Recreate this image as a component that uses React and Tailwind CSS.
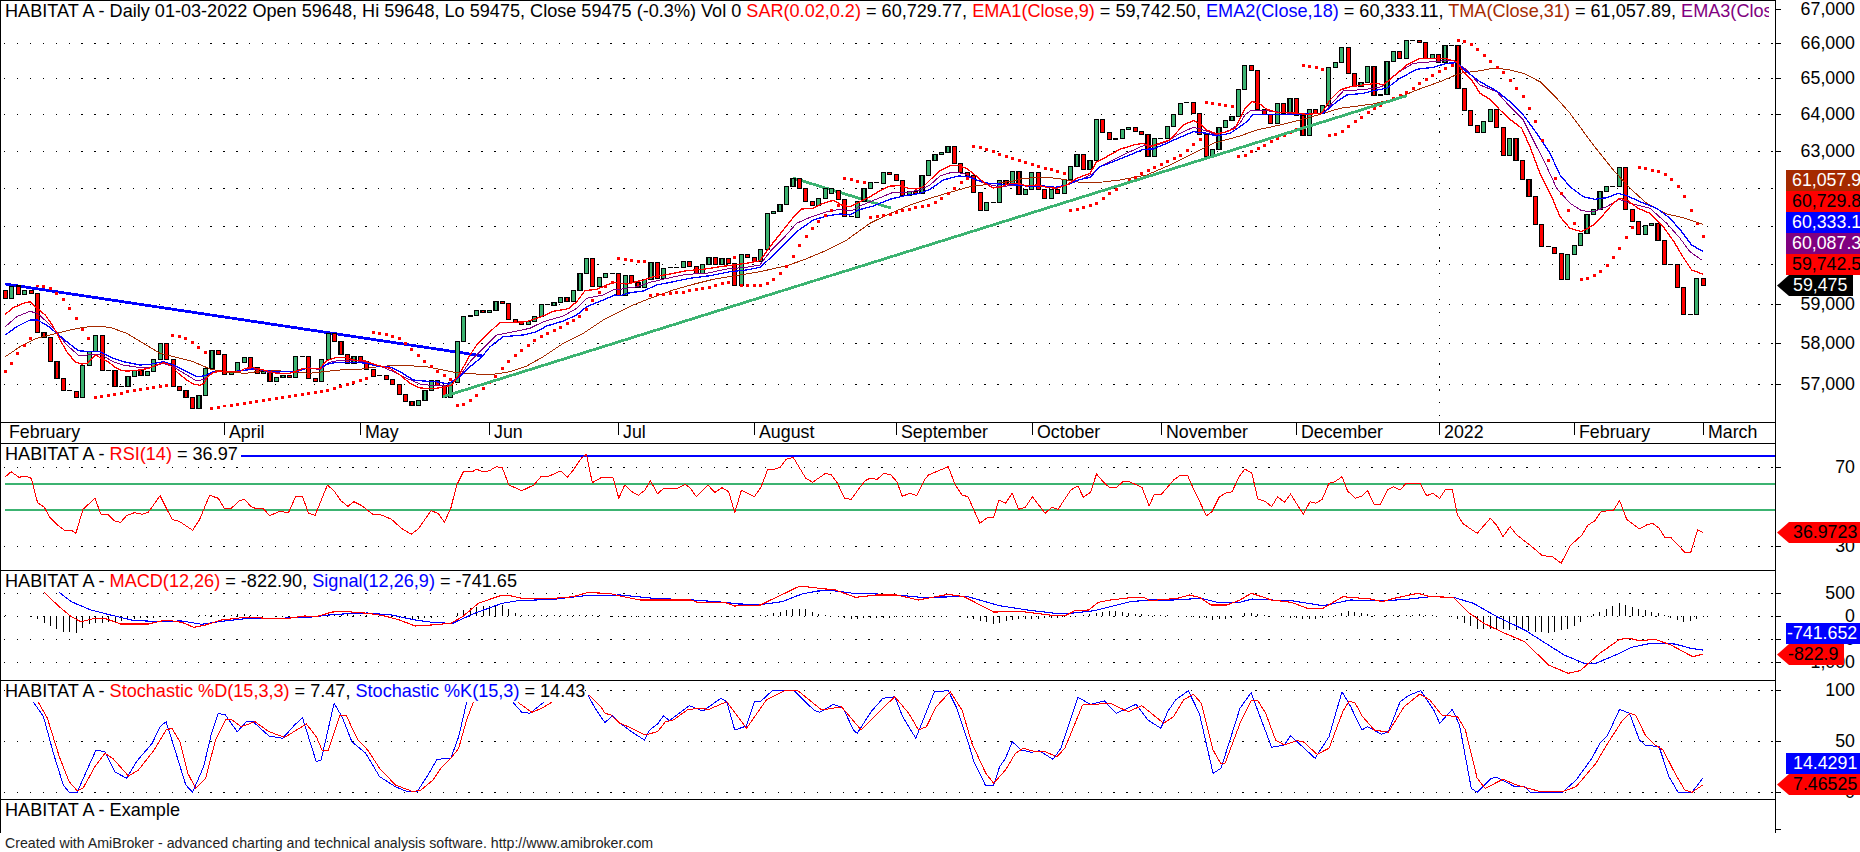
const RED = "#ff0000";
const BLUE = "#0000ff";
const GREEN = "#3cb371";
const BROWN = "#a52a00";
const PURPLE = "#800080";

// points were read off crops of the chart: crop offset + zoomed pixel / scale
const S = 2.529;
const crop = (x0, y0, sx, flat) => {
  const out = [];
  for (let i = 0; i < flat.length; i += 2) out.push([x0 + flat[i] / sx, y0 + flat[i + 1] / 3]);
  return out;
};
const toPath = (pts) => pts.map((p) => p[0].toFixed(1) + "," + p[1].toFixed(1)).join(" ");

const barX = (i) => 5.33 + 6.456 * i;

const barRows = [
  [270, "r62,85 g50,85 r48,73 g62,73 r62,70 r70,187 r187,203 r203,274 r274,325 r325,361 k362 r364,382 g286,382 g245,286 g196,245 r196,301 k301 r301,349 k349 g319,349 g301,319 r301,316 g304,316 g268,304 g220,268 r220,268 r268,349 r349,361 r361,382 r382,415 g376,415 g295,376 g241,295 r241,253 r253,313 g307,313 g277,307 g262,277 r262,292 r292,310 g304,310 r304,334 g322,334 g316,322 r316,322 g259,322 k259 r259,325"],
  [230, "r445,455 g388,455 g310,388 r310,334 r334,373 r373,400 g379,400 r379,394 r394,418 r418,439 k436 r436,448 r448,463 r463,493 r493,514 r514,526 g511,526 g481,511 g451,481 r451,466 r466,502 g457,502 g334,457 g259,334 k258 g241,256 r241,247 g241,247 g214,241 r214,220 r220,268 r268,277 r277,283 g274,283 g259,274 g223,259 k224 g217,226 g202,217 r202,214 g181,214 g130,181 g85,130 r85,169 g142,169 g130,142 k130 r130,196"],
  [130, "g436,496 r436,457 r457,472 g448,472 g397,448 r397,445 g415,445 k413 k412 g394,412 r394,409 r409,430 g403,430 g382,403 r382,403 g385,403 r385,400 r400,466 g373,466 r373,382 r382,394 g358,394 g250,358 g244,250 g223,244 g169,223 g145,169 r145,175 r175,214 r214,226 g205,226 g175,205 g175,190 r181,208 r208,259 k260 g214,262 g175,214 g157,175 k158 g127,160 r127,133 r133,151 r151,196 g184,196 r184,190 g136,190 g91,136"],
  [50, "g313,331 g307,313 g289,307 r289,340 r340,367 r367,376 r376,427 r427,481 g457,481 k457 g391,457 r391,403 g364,403 r364,433 g418,433 g367,418 r367,418 r418,445 g418,445 r418,430 g388,430 g349,388 g313,349 r313,358 g331,358 g208,331 r208,247 r247,268 k267 g238,265 g232,238 r232,244 r244,253 r253,319 g265,319 k265 g229,265 g193,229 g160,193 k158 r157,190 r190,253 r253,319 g298,319 g232,298 g211,232 g199,211 g118,199"],
  [30, "g106,178 r106,121 r121,238 r238,253 r253,280 g220,280 r220,250 g205,250 r205,256 r256,316 g238,316 r238,250 g226,250 g112,226 g97,112 g52,97 r52,130 r130,169 g157,169 g109,157 r109,196 k195 g94,193 g64,94 r64,85 g31,85 k31 r31,37 r37,85 g73,85 r73,97 g46,97 k46 r46,175 r175,241 r241,286 r286,307 g274,307 g238,274 r238,292 r292,376"],
  [60, "g235,286 r235,301 r301,358 r358,409 r409,493 r493,559 k560 r562,580 r580,658 g583,658 g556,583 g520,556 g463,520 g448,463 g394,448 g379,394 k379 g322,379 r322,448 r448,484 r484,523 g496,523 g490,496 r490,541 r541,613 k613 r613,682 r682,763 k763 g655,763 r655,676"],
];

const bars = barRows.flatMap(([y0, row]) =>
  row.split(" ").map((item) => {
    const [top, bot] = item.slice(1).split(",").map(Number);
    return { kind: item[0], top: y0 + top / 3, bot: y0 + (bot ?? top) / 3 };
  })
);

const ema1 = [
  ...crop(0, 270, 3, [16,133,40,113,70,100,91,95,112,115,136,135,160,170,178,205,200,245,225,275,245,282,262,280,286,255,304,265,325,275,343,290,364,302,385,303,420,300,445,295,470,285,490,278,510,285,535,310,560,330,580,342,600,346,612,340,622,320,640,308,660,303,690,305,720,305,735,295,760,293,790,300,830,310,870,310,885,305,910,295,930,295]),
  ...crop(310, 230, 3, [30,415,50,392,80,382,110,382,130,390,165,393,200,405,240,415,270,435,300,460,330,474,370,476,400,472,425,465,450,430,480,375,500,345,530,315,570,277,615,277,650,275,690,262,730,244,775,236,800,215,825,182,860,178,890,165,915,157,930,160]),
  ...crop(620, 130, 3, [20,462,70,450,100,440,150,432,200,422,250,418,300,410,340,405,380,400,420,392,450,350,490,300,520,262,545,237,580,235,610,220,640,211,665,225,690,230,720,215,745,203,775,185,810,168,840,167,865,175,890,177,910,170,930,150]),
  ...crop(930, 50, 3, [30,362,60,347,85,347,110,355,135,375,165,400,190,414,215,410,240,400,270,402,290,408,320,405,350,412,380,415,410,405,440,385,480,370,500,335,530,320,570,298,610,285,640,280,660,290,690,280,720,270,760,225,790,212,810,220,830,240,860,252,890,245,915,235,930,205]),
  ...crop(1240, 30, 3, [15,235,35,215,55,218,80,238,110,247,150,248,200,253,245,250,270,210,300,180,330,170,370,165,410,160,430,165,460,140,500,105,540,85,580,85,615,85,650,95,670,125,695,150,720,190,750,208,780,240]),
  ...crop(1480, 60, 3, [90,178,125,205,150,260,180,340,215,410,240,470,270,505,305,515,340,495,365,470,400,430,418,415,440,420,475,445,510,460,550,500,585,550,605,585,635,630,670,643]),
];

const ema2 = [
  ...crop(0, 270, 3, [16,195,50,170,90,150,112,150,140,165,170,190,200,215,235,242,270,245,300,245,340,265,370,275,420,285,450,283,490,275,520,285,560,305,590,320,612,318,640,305,680,305,720,303,770,295,800,303,860,305,895,303,920,295,930,296]),
  ...crop(310, 230, 3, [30,415,50,403,80,397,140,397,170,400,200,408,240,411,270,425,310,450,340,453,380,455,415,462,450,440,480,410,515,382,540,350,580,320,640,315,680,305,710,288,760,273,800,255,830,230,880,210,915,195,930,197]),
  ...crop(620, 130, 3, [30,488,70,483,110,465,160,455,210,445,270,437,330,425,380,420,420,412,450,385,490,345,530,305,580,270,620,258,660,252,690,255,715,240,760,228,810,208,850,198,900,190,930,178]),
  ...crop(930, 50, 3, [40,390,85,378,115,380,140,390,175,400,220,403,260,405,290,408,340,408,375,412,410,405,445,390,480,382,510,350,555,333,600,315,640,298,670,297,710,280,750,262,790,245,830,250,860,258,900,250,930,230]),
  ...crop(1240, 30, 3, [20,275,40,253,100,253,180,253,250,250,290,215,320,195,370,190,410,180,440,175,480,145,530,118,580,112,620,100,650,98,680,125,720,155,770,183]),
  ...crop(1480, 60, 3, [90,125,130,165,170,220,210,280,240,345,270,380,310,410,345,418,380,413,415,400,440,407,480,425,530,445,570,475,605,515,635,555,670,575]),
];

const ema3 = [
  ...crop(0, 270, 3, [16,170,50,140,90,124,112,130,140,155,170,185,200,225,235,255,260,255,300,253,340,275,370,285,420,293,450,293,490,280,520,290,560,315,590,333,612,328,640,305,700,305,770,297,810,308,870,310,900,298,930,293]),
  ...crop(310, 230, 3, [30,420,55,398,90,390,140,392,170,398,210,408,250,425,290,445,330,462,370,467,410,465,450,437,480,395,520,355,560,315,610,305,660,295,700,275,760,258,800,235,830,205,880,195,915,177,930,178]),
  ...crop(620, 130, 3, [50,470,90,457,150,443,200,433,260,430,320,417,380,412,420,405,450,365,490,325,530,280,570,262,620,245,660,238,695,243,720,228,770,207,820,187,860,187,900,180,930,165]),
  ...crop(930, 50, 3, [30,378,65,367,100,370,130,385,170,403,210,410,260,405,300,408,350,410,385,412,420,402,460,385,490,370,510,350,560,325,600,305,640,287,670,288,710,275,750,250,790,232,820,240,860,255,900,240,930,220]),
  ...crop(1240, 30, 3, [15,255,35,240,80,242,150,250,250,250,280,215,310,183,380,178,425,170,470,130,520,100,580,95,640,90,680,120,720,165]),
  ...crop(1480, 60, 3, [50,95,90,140,130,180,160,240,200,320,230,385,270,430,305,452,340,455,380,440,418,418,450,430,510,445,560,490,600,535,630,575,665,600]),
];

const tma = [
  ...crop(0, 270, 3, [16,260,60,230,110,205,170,190,210,180,250,172,290,169,330,172,380,190,430,220,480,250,530,262,580,275,630,297,680,307,740,310,800,300,870,305,930,310]),
  ...crop(310, 230, 3, [40,425,90,420,150,418,190,412,240,407,295,407,350,410,400,420,440,428,510,433,550,433,600,425,650,408,700,380,760,340,820,310,880,270,930,245]),
  ...crop(620, 130, 3, [40,525,90,505,160,480,220,463,280,448,340,438,420,425,500,407,550,390,610,365,680,330,750,280,800,255,870,225,930,205]),
  ...crop(930, 50, 3, [50,430,120,410,180,402,240,395,280,385,350,382,400,388,450,397,510,397,570,390,650,375,720,345,790,310,850,280,930,258]),
  ...crop(1240, 30, 3, [50,300,120,285,200,265,300,235,400,222,470,205,530,180,600,155,660,130]),
  ...crop(1480, 60, 3, [0,32,40,25,80,28,130,40,180,65,230,115,270,160,340,255,400,330,450,385,500,430,560,462,610,473,668,493]),
];

const sar = [
  ...crop(0, 270, 3, [16,304,34,280,52,250,73,226,91,205,112,48,130,50,151,55,169,70,190,88,208,115,229,145,247,178,265,205,286,382,304,379,325,376,343,373,364,370,382,364,403,361,421,358,442,355,460,352,481,349,499,346,517,196,538,199,556,205,577,217,595,232,616,247,634,415,655,412,673,408,694,406,712,403,733,400,751,397,769,394,790,391,808,388,829,385,847,382,868,379,886,376,907,373,925,370]),
  ...crop(310, 230, 3, [16,487,34,484,52,481,73,475,91,469,112,463,130,457,151,451,169,445,190,307,208,310,229,313,247,319,268,325,286,340,304,358,325,376,343,394,364,409,382,424,403,436,421,448,442,526,460,523,481,511,499,496,520,475,538,457,556,439,577,415,595,394,616,376,634,361,655,346,673,331,694,319,712,310,733,301,751,292,772,280,790,271,808,259,829,238,847,211,868,187,886,169,907,157,925,85]),
  ...crop(620, 130, 3, [16,388,34,391,55,394,73,394,91,496,112,493,130,493,151,490,169,487,190,487,208,481,229,478,247,475,268,472,286,466,307,460,325,457,343,382,364,466,382,466,403,466,421,466,442,460,460,448,481,430,499,409,520,379,538,346,559,319,577,295,595,274,616,256,634,241,655,226,673,145,694,148,712,154,733,157,751,262,772,259,790,256,811,253,829,247,847,241,868,238,886,232,907,229,925,226]),
  ...crop(930, 50, 3, [16,457,34,445,55,430,73,415,94,397,112,385,130,289,151,292,169,298,190,304,208,313,229,319,247,325,268,331,286,337,307,343,325,349,346,355,364,358,382,364,403,370,421,481,442,478,460,472,481,466,499,460,520,445,538,430,559,418,577,403,598,391,616,382,634,370,655,361,673,352,694,343,712,334,733,325,751,316,772,301,790,283,811,268,829,157,847,160,868,163,886,166,907,169,925,319]),
  ...crop(1240, 30, 3, [16,376,34,364,55,355,73,346,94,334,112,325,133,316,151,307,169,298,190,106,208,109,229,112,247,118,268,316,286,313,307,304,325,289,346,274,364,262,385,247,403,235,421,226,442,214,460,205,481,196,499,187,520,175,538,160,559,148,577,136,598,124,616,115,637,106,655,31,673,34,694,43,712,58,733,76,751,94,772,112,790,127]),
  ...crop(1480, 60, 3, [31,4,52,22,70,37,91,61,109,85,130,109,148,145,166,184,187,241,205,301,226,355,244,400,265,451,283,490,304,658,322,655,343,646,361,634,382,616,400,592,418,565,439,532,457,502,478,322,496,325,517,331,535,334,556,343,574,358,595,379,613,409,634,451,652,492,670,529]),
];

const rsi = [
  ...crop(0, 420, S, [14,170,28,155,48,172,65,168,79,175,95,248,112,262,125,290,145,315,162,330,180,330,192,340,210,268,240,235,255,282,272,282,290,303,305,307,320,287,340,278,360,283,375,277,405,227,435,298,455,305,487,331,505,298,530,226,552,235,568,267,585,265,605,243,618,238,635,260,650,267,665,265,682,287,705,275,730,277,748,229,765,229,780,280,797,286,828,195,845,213,862,242,880,259,895,245,915,257,945,285,960,283,990,298,1015,325,1040,343,1058,327,1090,272,1108,280,1124,307,1140,265,1155,195,1172,155,1195,155,1205,148,1222,155,1238,152,1255,140,1270,143,1287,195,1320,212,1350,195,1368,170,1385,170,1418,153,1435,172,1450,150,1470,115,1483,103,1498,188,1520,173,1550,172,1565,235]),
  ...crop(620, 420, S, [12,195,30,215,47,226,63,210,77,182,95,222,110,205,145,205,165,193,178,205,193,230,222,195,240,217,258,203,275,215,290,278,307,211,340,230,357,200,373,150,390,148,405,142,420,118,438,112,470,175,487,187,520,160,535,165,550,190,568,235,585,238,605,205,620,182,632,175,650,178,668,160,685,165,700,185,714,229,733,220,750,227,770,180,780,165,830,140,848,195,865,225,880,230,910,310,930,292,945,292,958,240,975,250,992,220,1008,268,1025,262,1043,230,1075,280,1092,262,1108,268,1140,210,1158,198,1172,232,1190,217,1205,162,1222,185,1238,203,1255,203,1272,185,1288,185,1320,202,1338,257,1352,222,1370,222,1400,180,1418,165,1435,165,1450,205,1483,287,1497,275,1515,232,1530,220,1548,215,1565,172]),
  ...crop(1240, 420, S, [12,147,30,160,45,237,65,245,80,260,95,230,112,247,128,222,160,283,177,245,192,250,208,238,225,190,240,185,258,170,272,213,292,235,308,228,323,212,340,255,355,253,373,210,388,200,405,210,420,190,455,190,472,227,488,220,505,235,520,208,537,208,550,285,565,312,600,340,633,295,650,317,665,350,683,320,700,345,733,375,765,407,790,410,812,430,835,377,865,345,880,315,897,303,913,275,945,270,960,242,978,298,1010,327,1028,315,1043,310,1060,325,1075,353,1090,353,1125,397,1140,397,1157,330,1170,337]),
];

const macd = [
  ...crop(0, 420, S, [112,517,145,555,180,590,205,605,240,595,270,597,305,612,375,612,420,600,460,607,490,622,520,615,560,600,620,592,680,595,730,595,770,588,800,590,840,576,880,575,930,580,970,587,1010,600,1050,618,1090,615,1140,610,1170,590,1210,550,1265,527,1290,527,1320,535,1400,535,1450,530,1485,518,1540,520,1568,528]),
  ...crop(620, 420, S, [50,540,90,540,180,540,195,547,265,547,290,558,355,555,385,538,455,498,520,507,540,508,595,532,650,525,700,525,755,540,830,523,870,530,945,576,1020,575,1100,587,1130,585,1150,572,1185,570,1210,547,1240,540,1300,532,1325,532,1340,542,1410,535,1440,525,1465,532,1495,555,1535,555,1568,540]),
  ...crop(1240, 420, S, [28,520,60,532,80,540,130,547,170,565,210,565,260,530,330,537,360,545,390,535,450,520,480,530,540,532,580,580,620,612,670,640,720,665,780,735,830,760,860,752,910,700,960,658,985,655,1010,662,1050,658,1090,675,1145,710,1170,703]),
];

const signal = [
  ...crop(0, 420, S, [150,517,180,545,230,570,280,585,340,602,400,604,460,603,510,613,560,604,620,596,700,595,780,592,850,583,930,579,990,585,1050,600,1100,608,1145,610,1200,580,1270,550,1310,542,1400,538,1480,527,1568,525]),
  ...crop(620, 420, S, [85,535,185,540,265,547,300,552,360,553,410,545,460,522,500,513,540,512,590,520,650,522,700,525,760,532,880,530,960,557,1030,570,1100,580,1140,580,1200,572,1290,545,1340,540,1400,540,1470,535,1510,547,1568,547]),
  ...crop(1240, 420, S, [30,537,80,540,130,542,210,557,280,540,360,543,430,537,480,530,540,532,590,550,650,590,720,630,820,705,870,730,900,730,960,700,990,682,1040,670,1100,672,1140,685,1170,690]),
];

// macd histogram, [x in crop px, height from the zero line]
const histKeys = [
  ...[[30,-2],[90,2],[100,14],[160,46],[195,49],[225,22],[300,16],[330,8],[400,3],[500,-3],[620,-6],[700,2],[800,-2],[850,-8],[930,-3],[1040,8],[1090,5],[1140,-2],[1170,-18],[1210,-30],[1270,-34],[1300,-12],[1320,-4],[1500,-5],[1560,2]].map(([x, h]) => [x / S, h]),
  ...[[0,3],[300,2],[370,-4],[440,-24],[470,-22],[500,-8],[530,-3],[580,8],[700,3],[850,0],[900,10],[945,22],[1000,10],[1130,3],[1180,-6],[1250,-18],[1310,-6],[1400,-2],[1480,6],[1500,10],[1560,4]].map(([x, h]) => [620 + x / S, h]),
  ...[[0,-4],[20,-12],[60,-3],[120,3],[190,10],[240,-3],[270,-15],[350,-2],[460,-6],[540,2],[560,15],[600,38],[700,40],[780,50],[830,38],[865,15],[880,0],[910,-12],[960,-40],[1000,-25],[1060,-8],[1080,0],[1125,18],[1170,3]].map(([x, h]) => [1240 + x / S, h]),
];

const histAt = (x) => {
  for (let k = 1; k < histKeys.length; k++) {
    const [x1, h1] = histKeys[k];
    if (x <= x1) {
      const [x0, h0] = histKeys[k - 1];
      return h0 + ((h1 - h0) * (x - x0)) / (x1 - x0 || 1);
    }
  }
  return 3;
};

const stochD = [
  crop(0, 420, S, [97,847,120,895,150,1010,175,1085,195,1112,210,1105,240,1040,265,1000,285,1015,325,1068,350,1050,390,990,420,930,435,925,455,965,475,1060,495,1105,520,1075,545,960,570,900,585,898,610,920,645,905,680,935,720,952,750,930,775,912,800,950,815,992,830,992,860,885,875,885,905,960,930,990,960,1045,1000,1095,1045,1115,1065,1110,1095,1080,1115,1045,1140,1015,1160,985,1180,900,1197,847]),
  crop(0, 420, S, [1310,847,1345,877,1370,865,1395,847]),
  [
    ...crop(0, 420, S, [1490,825,1520,860,1530,880,1545,885,1568,910]),
    ...crop(620, 420, S, [30,925,63,945,95,935,115,905,135,900,170,870,195,865,225,868,270,845,320,925,370,840,420,810,450,812,510,870,560,860,610,930,660,870,695,830,730,880,755,930,775,920,800,860,835,815,865,870,890,970,925,1060,945,1090,975,1050,1000,1000,1020,985,1050,995,1075,995,1105,1010,1125,985,1170,855,1240,850,1285,875,1320,857,1375,910,1400,890,1425,840,1450,822,1470,850,1500,990,1520,1032,1530,1030,1568,910]),
    ...crop(1240, 420, S, [28,842,45,842,65,880,90,960,112,975,145,962,160,965,195,1003,225,985,260,875,275,845,290,847,310,890,340,930,375,937,415,860,455,822,480,840,510,885,550,890,570,930,600,1075,620,1105,665,1078,700,1095,760,1115,815,1115,850,1100,900,1030,930,970,965,905,985,880,1000,885,1025,945,1050,975,1070,990,1100,1060,1125,1110,1143,1117,1170,1095]),
  ],
];

const stochK = [
  crop(0, 420, S, [85,847,110,890,135,1000,160,1095,175,1117,195,1117,220,1050,243,990,265,995,290,1055,320,1075,345,1025,385,970,405,920,420,905,445,1000,470,1095,487,1117,515,1040,535,940,552,880,570,885,600,935,625,903,640,905,680,948,715,955,745,915,765,893,780,950,800,1025,812,1020,845,850,865,890,890,965,925,1000,960,1070,1000,1100,1030,1115,1055,1115,1085,1060,1105,1018,1140,1015,1160,950,1180,847]),
  crop(0, 420, S, [1297,847,1320,877,1340,880,1375,847]),
  [
    ...crop(0, 420, S, [1487,825,1505,865,1530,908,1548,887,1568,910]),
    ...crop(620, 420, S, [35,940,62,960,75,930,95,912,110,887,125,902,175,857,210,873,255,835,270,845,290,930,320,918,340,845,355,845,385,812,440,812,490,870,505,877,540,853,565,865,590,930,600,940,635,875,665,835,695,830,715,890,748,955,795,815,830,812,850,860,880,965,895,1025,925,1098,945,1095,960,1040,975,1015,992,965,1015,990,1040,997,1060,992,1095,1018,1115,985,1158,832,1190,853,1225,843,1255,880,1305,853,1335,900,1368,925,1385,875,1405,840,1437,812,1465,880,1500,1060,1520,1045,1568,865]),
    ...crop(1240, 420, S, [28,818,80,982,112,975,128,947,190,1015,225,950,258,815,280,860,308,930,323,920,358,943,375,935,405,845,425,827,457,812,490,870,505,910,537,868,555,915,585,1105,600,1117,635,1075,650,1072,695,1100,720,1100,735,1117,815,1117,850,1080,890,1015,910,970,930,945,960,868,985,880,1010,960,1025,975,1060,980,1085,1070,1108,1117,1143,1117,1170,1075]),
  ],
];

const months = [
  { label: "February", cls: "w-[223px] pl-2" },
  { label: "April", cls: "w-[136px] pl-1 border-l border-black" },
  { label: "May", cls: "w-[129px] pl-1 border-l border-black" },
  { label: "Jun", cls: "w-[129px] pl-1 border-l border-black" },
  { label: "Jul", cls: "w-[136px] pl-1 border-l border-black" },
  { label: "August", cls: "w-[142px] pl-1 border-l border-black" },
  { label: "September", cls: "w-[136px] pl-1 border-l border-black" },
  { label: "October", cls: "w-[129px] pl-1 border-l border-black" },
  { label: "November", cls: "w-[135px] pl-1 border-l border-black" },
  { label: "December", cls: "w-[143px] pl-1 border-l border-black" },
  { label: "2022", cls: "w-[135px] pl-1 border-l border-black" },
  { label: "February", cls: "w-[129px] pl-1 border-l border-black" },
  { label: "March", cls: "flex-1 pl-1 border-l border-black" },
];

const axisLabels = [
  [9, "67,000"], [43.5, "66,000"], [78.5, "65,000"], [114.5, "64,000"], [151.5, "63,000"],
  [304.5, "59,000"], [343.5, "58,000"], [384.5, "57,000"],
  [467.3, "70"], [546.3, "30"],
  [593.3, "500"], [616.3, "0"], [639.3, "-500"], [662.3, "-1,000"],
  [690.3, "100"], [741.7, "50"], [792.3, "0"], [829, ""],
];

const RECT = "ml-[10px]";
const ARROW = "ml-px [clip-path:polygon(12px_0,100%_0,100%_100%,12px_100%,0_50%)]";
const tagStacks = [
  {
    top: 170,
    tags: [
      { text: "61,057.9", cls: `${RECT} pl-[6px] bg-[#a52a00] text-white` },
      { text: "60,729.8", cls: `${RECT} pl-[6px] bg-[#ff0000] text-black` },
      { text: "60,333.1", cls: `${RECT} pl-[6px] bg-[#0000ff] text-white` },
      { text: "60,087.3", cls: `${RECT} pl-[6px] bg-[#800080] text-white` },
      { text: "59,742.5", cls: `${RECT} pl-[6px] bg-[#ff0000] text-black` },
      { text: "59,475", cls: `${ARROW} mr-[7px] pl-[16px] bg-black text-white` },
    ],
  },
  { top: 522, tags: [{ text: "36.9723", cls: `${ARROW} pl-[16px] bg-[#ff0000] text-black` }] },
  {
    top: 623,
    tags: [
      { text: "-741.652", cls: `${RECT} pl-px bg-[#0000ff] text-white` },
      { text: "-822.9", cls: `${ARROW} mr-[16px] pl-[11px] bg-[#ff0000] text-black` },
    ],
  },
  {
    top: 753,
    tags: [
      { text: "14.4291", cls: `${RECT} pl-[7px] bg-[#0000ff] text-white` },
      { text: "7.46525", cls: `${ARROW} pl-[16px] bg-[#ff0000] text-black` },
    ],
  },
];

function Line({ pts, color, width = 1 }) {
  return <polyline points={toPath(pts)} fill="none" stroke={color} strokeWidth={width} strokeLinejoin="round" />;
}

function Grid({ ys }) {
  return ys.map((y) => (
    <line key={y} x1="4" x2="1775" y1={y} y2={y} stroke="#000" strokeWidth="1.3" strokeDasharray="1.3 11.6" />
  ));
}

function Pane({ top, height, title, titleCls = "", children }) {
  return (
    <div className="relative shrink-0 border-b border-black last:border-b-0" style={{ height }}>
      <svg
        className="absolute top-0 left-0"
        width="1775"
        height={height}
        viewBox={`1 ${top} 1775 ${height}`}
        shapeRendering="crispEdges"
      >
        {children}
      </svg>
      <div className={`relative ml-[4px] w-fit bg-white text-[18.1px] leading-[20px] whitespace-nowrap overflow-hidden ${titleCls}`}>
        HABITAT A - {title}
      </div>
    </div>
  );
}

const r = "text-[#ff0000]";
const b = "text-[#0000ff]";

export default function App() {
  return (
    <div className="w-[1860px] h-[852px] flex flex-col bg-white overflow-hidden text-[17.8px] text-black font-['Liberation_Sans',Arial,sans-serif]">
      <div className="flex h-[833px] shrink-0">
        <div className="w-[1776px] shrink-0 border-l border-r border-t border-black">
          <Pane
            top={1}
            height={422}
            titleCls="max-w-[1764px]"
            title={
              <>
                Daily 01-03-2022 Open 59648, Hi 59648, Lo 59475, Close 59475 (-0.3%) Vol 0{" "}
                <span className={r}>SAR(0.02,0.2)</span> = 60,729.77, <span className={r}>EMA1(Close,9)</span> = 59,742.50,{" "}
                <span className={b}>EMA2(Close,18)</span> = 60,333.11, <span className="text-[#a52a00]">TMA(Close,31)</span> ={" "}
                61,057.89, <span className="text-[#800080]">EMA3(Close</span>
              </>
            }
          >
            <Grid ys={[43.3, 78.3, 114.3, 151.3, 188.3, 226.3, 264.3, 304.3, 343.3, 384.3]} />
            <line x1="1439.5" x2="1439.5" y1="28" y2="422" stroke="#000" strokeWidth="1.3" strokeDasharray="1.3 11.6" />
            <line x1="5.3" y1="284" x2="483" y2="356" stroke={BLUE} strokeWidth="2.8" />
            <line x1="793" y1="178" x2="890.7" y2="208" stroke={GREEN} strokeWidth="2.8" />
            {bars.map((bar, i) =>
              bar.kind === "k" ? (
                <line key={i} x1={barX(i) - 2.5} x2={barX(i) + 2.5} y1={bar.top} y2={bar.top} stroke="#000" strokeWidth="1.3" />
              ) : (
                <rect
                  key={i}
                  x={barX(i) - 2}
                  y={bar.top}
                  width="4"
                  height={bar.bot - bar.top}
                  fill={bar.kind === "g" ? GREEN : RED}
                  stroke="#000"
                  strokeWidth="1.2"
                />
              )
            )}
            <Line pts={tma} color={BROWN} />
            <Line pts={ema3} color={PURPLE} />
            <Line pts={ema2} color={BLUE} width={1.3} />
            <Line pts={ema1} color={RED} width={1.3} />
            {sar.map((p, i) => (
              <rect key={i} x={p[0] - 1.3} y={p[1] - 1.3} width="2.6" height="2.6" fill={RED} />
            ))}
            <line x1="443" y1="396.7" x2="1406.7" y2="95.7" stroke={GREEN} strokeWidth="2.8" />
          </Pane>

          <div className="flex h-[21px] border-b border-black leading-[19px]">
            {months.map((month, i) => (
              <div key={i} className={`${month.cls} shrink-0 h-[12px] whitespace-nowrap`}>
                {month.label}
              </div>
            ))}
          </div>

          <Pane
            top={444}
            height={127}
            title={
              <>
                <span className={r}>RSI(14)</span> = 36.97
              </>
            }
          >
            <Grid ys={[467.3, 546.3]} />
            <line x1="241" y1="455.7" x2="1775" y2="455.7" stroke={BLUE} strokeWidth="2" />
            <line x1="5" y1="483.7" x2="1775" y2="483.7" stroke={GREEN} strokeWidth="2" />
            <line x1="5" y1="509.7" x2="1775" y2="509.7" stroke={GREEN} strokeWidth="2" />
            <Line pts={rsi} color={RED} />
          </Pane>

          <Pane
            top={571}
            height={110}
            title={
              <>
                <span className={r}>MACD(12,26)</span> = -822.90, <span className={b}>Signal(12,26,9)</span> = -741.65
              </>
            }
          >
            <Grid ys={[593.3, 616.3, 639.3, 662.3]} />
            {bars.map((_, i) => {
              const x = barX(i);
              const h = histAt(x) / 3;
              return <line key={i} x1={x} x2={x} y1={616.3} y2={616.3 + h} stroke="#000" strokeWidth="1" />;
            })}
            <Line pts={signal} color={BLUE} width={1.1} />
            <Line pts={macd} color={RED} width={1.1} />
          </Pane>

          <Pane
            top={681}
            height={119}
            title={
              <>
                <span className={r}>Stochastic %D(15,3,3)</span> = 7.47, <span className={b}>Stochastic %K(15,3)</span> = 14.43
              </>
            }
          >
            <Grid ys={[690.3, 741.7, 792.3]} />
            {stochK.map((pts, i) => (
              <Line key={i} pts={pts} color={BLUE} />
            ))}
            {stochD.map((pts, i) => (
              <Line key={i} pts={pts} color={RED} />
            ))}
          </Pane>

          <Pane top={800} height={32} title="Example" />
        </div>

        <div className="relative flex-1">
          {axisLabels.map(([y, text]) => (
            <div key={y} className="absolute left-0 right-[5px] flex items-center justify-between h-[20px] -mt-[10px]" style={{ top: y }}>
              <span className="w-[5px] h-px bg-black" />
              <span>{text}</span>
            </div>
          ))}
          {tagStacks.map((stack) => (
            <div key={stack.top} className="absolute left-0 right-0 flex flex-col" style={{ top: stack.top }}>
              {stack.tags.map((tag) => (
                <div key={tag.text} className={`h-[21px] leading-[21px] whitespace-nowrap overflow-hidden ${tag.cls}`}>
                  {tag.text}
                </div>
              ))}
            </div>
          ))}
        </div>
      </div>
      <div className="pl-[5px] h-[19px] leading-[20px] text-[14.2px] text-[#222] whitespace-nowrap">
        Created with AmiBroker - advanced charting and technical analysis software. http://www.amibroker.com
      </div>
    </div>
  );
}
